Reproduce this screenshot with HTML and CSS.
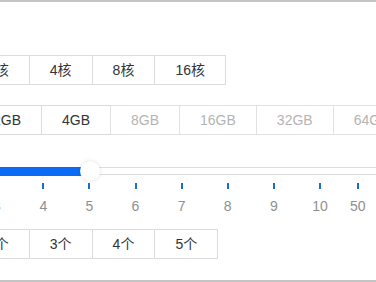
FILE: index.html
```html
<!DOCTYPE html>
<html lang="zh">
<head>
<meta charset="utf-8">
<link rel="stylesheet" href="styles.css">
</head>
<body>
<div class="frame">
  <div class="group g-cpu">
    <span class="btn">2核</span>
    <span class="btn">4核</span>
    <span class="btn">8核</span>
    <span class="btn">16核</span>
  </div>
  <div class="group g-mem">
    <span class="btn">2GB</span>
    <span class="btn">4GB</span>
    <span class="btn disabled">8GB</span>
    <span class="btn disabled">16GB</span>
    <span class="btn disabled">32GB</span>
    <span class="btn disabled">64GB</span>
  </div>
  <div class="slider">
    <div class="track"><div class="fill" style="width:90px"></div></div>
    <div class="thumb" style="left:90px"></div>
    <span class="tick" style="left:-3px"></span><span class="mark" style="left:-3px">3</span>
    <span class="tick" style="left:43.3px"></span><span class="mark" style="left:43.3px">4</span>
    <span class="tick" style="left:89.4px"></span><span class="mark" style="left:89.4px">5</span>
    <span class="tick" style="left:135.5px"></span><span class="mark" style="left:135.5px">6</span>
    <span class="tick" style="left:181.6px"></span><span class="mark" style="left:181.6px">7</span>
    <span class="tick" style="left:227.7px"></span><span class="mark" style="left:227.7px">8</span>
    <span class="tick" style="left:273.8px"></span><span class="mark" style="left:273.8px">9</span>
    <span class="tick" style="left:320px"></span><span class="mark" style="left:320px">10</span>
    <span class="tick" style="left:357.7px"></span><span class="mark" style="left:357.7px">50</span>
  </div>
  <div class="group g-num">
    <span class="btn">2个</span>
    <span class="btn">3个</span>
    <span class="btn">4个</span>
    <span class="btn">5个</span>
  </div>
</div>
</body>
</html>
```
FILE: styles.css
```css
html, body {
  margin: 0;
  padding: 0;
  background: #fff;
}
.frame {
  width: 376px;
  height: 282px;
  box-sizing: border-box;
  border-top: 2px solid #c4c4c4;
  border-bottom: 2px solid #c4c4c4;
  overflow: hidden;
  font-family: "Liberation Sans", "Noto Sans CJK SC", sans-serif;
  font-size: 14px;
}
.group {
  display: flex;
  white-space: nowrap;
}
.btn {
  flex: none;
  box-sizing: border-box;
  height: 30px;
  line-height: 28px;
  padding: 0 20px;
  border: 1px solid #dcdcdc;
  margin-left: -1px;
  color: #333;
  background: #fff;
}
.btn.disabled {
  color: #b4b4b4;
  border-color: #e2e2e2;
}
.g-cpu {
  margin-top: 53px;
  margin-left: -33px;
}
.g-mem {
  margin-top: 20px;
  margin-left: -27px;
}
.g-num {
  margin-left: -33px;
}
.slider {
  position: relative;
  padding-top: 32px;
  height: 62px;
}
.track {
  position: relative;
  height: 8px;
  box-sizing: border-box;
  border-top: 1px solid #dcdcdc;
  border-bottom: 1px solid #dcdcdc;
  background: #fff;
}
.fill {
  position: absolute;
  left: 0;
  top: -1px;
  height: 9px;
  background: #0b6bf5;
}
.thumb {
  position: absolute;
  top: 26px;
  width: 20px;
  height: 20px;
  margin-left: -10px;
  border-radius: 50%;
  background: #fff;
  box-shadow: 0 0 4px rgba(0, 0, 0, 0.12);
}
.tick {
  position: absolute;
  top: 48px;
  width: 2px;
  height: 6px;
  margin-left: -1px;
  background: #1d6fc6;
}
.mark {
  position: absolute;
  top: 62px;
  line-height: 18px;
  transform: translateX(-50%);
  color: #8f8f8f;
  font-size: 14px;
}
```
